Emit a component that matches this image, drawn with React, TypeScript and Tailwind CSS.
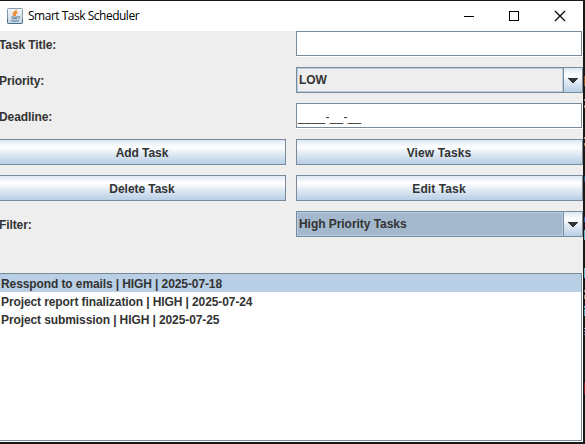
import type { ReactNode } from 'react';

const tasks = [
  { text: 'Resspond to emails | HIGH | 2025-07-18', selected: true },
  { text: 'Project report finalization | HIGH | 2025-07-24', selected: false },
  { text: 'Project submission | HIGH | 2025-07-25', selected: false },
];

function JavaIcon() {
  return (
    <svg width="16" height="16" viewBox="0 0 16 16" className="shrink-0">
      <defs>
        <linearGradient id="tile" x1="0" y1="0" x2="0" y2="1">
          <stop offset="0" stopColor="#f4f7f9" />
          <stop offset="1" stopColor="#c3d2df" />
        </linearGradient>
      </defs>
      <rect x="0.5" y="0.5" width="15" height="15" rx="1" fill="url(#tile)" stroke="#8199ab" />
      <path d="M0.5 11v3.5q0 1 1 1h13q1 0 1-1V11" fill="none" stroke="#47708f" />
      <path d="M9.2 1.8C9.6 3.8 5.8 4.3 6.2 6c.2.9 1 1.2 1 2.1M10.5 4.2C8.8 4.8 7.8 5.4 8.3 6.4c.3.6.4.9-.1 1.6" fill="none" stroke="#ee8a2d" strokeWidth="1.5" />
      <path d="M4.5 8.8q3.5 1 6.5 0M5 10.5q2.8.9 5.3 0M4 12.7q4 1.2 8-.1M11.2 8.6c2.2-.6 2 1.6.2 2" fill="none" stroke="#557b98" />
    </svg>
  );
}

function TitleBar() {
  return (
    <header className="flex h-[30px] items-center bg-white pl-[7px]">
      <JavaIcon />
      <span className="ml-[5px] flex-1 whitespace-nowrap font-['Open_Sans',sans-serif] text-[12px] leading-4 tracking-[-0.49px] text-black">
        Smart Task Scheduler
      </span>
      <svg width="102" height="10" viewBox="0 0 102 10" shapeRendering="crispEdges" className="mr-[17px] overflow-visible" fill="none" stroke="#000">
        <path d="M0 5.5h10M45.5.5h9v9h-9z" />
        <path d="M91 0l10 10M101 0l-10 10" shapeRendering="auto" strokeWidth="1.2" />
      </svg>
    </header>
  );
}

function Label({ children }: { children: ReactNode }) {
  return <div className="-ml-px flex h-[26px] items-center pt-[2px]">{children}</div>;
}

function TextField({ value }: { value?: string }) {
  return (
    <div className="h-[26px] border-r border-b border-white">
      <div className="flex h-[25px] items-center border border-[#7a8a99] bg-white pl-px pt-[3px] font-normal tracking-[0.2px]">{value}</div>
    </div>
  );
}

function Button({ children, first }: { children: ReactNode; first?: boolean }) {
  return (
    <button
      className={`flex h-[26px] items-center justify-center border-y border-r border-[#7a8a99] bg-[linear-gradient(180deg,#dde8f3_0%,#ffffff_30%,#dde8f3_60%,#b8cfe5_100%)] pt-[2px] ${first ? 'pr-px tracking-[-0.05px]' : 'border-l pr-px tracking-[0.1px]'}`}
    >
      {children}
    </button>
  );
}

function ComboBox({ value, focused }: { value: string; focused?: boolean }) {
  return (
    <div className="flex h-[26px] border border-[#7a8a99] tracking-[-0.05px]">
      <div className={`flex flex-1 items-center border border-[#b8cfe5] pl-[1px] ${focused ? 'bg-[#a3b8cc]' : 'bg-[#eeeeee]'}`}>
        {value}
      </div>
      <div className="flex w-[19px] items-start justify-center border-l border-[#7a8a99] bg-[linear-gradient(180deg,#dde8f3_0%,#ffffff_30%,#dde8f3_60%,#b8cfe5_100%)] pt-[10px]">
        <svg width="10" height="5" viewBox="0 0 10 5" shapeRendering="crispEdges">
          <path d="M0 0h10v1H9v1H8v1H7v1H6v1H4V4H3V3H2V2H1V1H0z" fill="#333" />
        </svg>
      </div>
    </div>
  );
}

function TaskList() {
  return (
    <div className="mt-9 h-[169px] border-r border-b border-white">
      <ul className="h-[168px] border-t border-r border-b border-[#7a8a99] bg-white">
        {tasks.map((task) => (
          <li key={task.text} className={`flex h-[18px] items-center whitespace-nowrap pl-px pt-[2px] ${task.selected ? 'bg-[#b8cfe5]' : ''}`}>
            {task.text}
          </li>
        ))}
      </ul>
    </div>
  );
}

// Sliver of the editor window visible behind the right edge.
function Backdrop() {
  return (
    <div className="flex w-[2px] flex-col items-end">
      <div className="mt-[75px] h-[10px] w-px bg-[#8a5a22]" />
      <div className="mt-[13px] h-[2px] w-px bg-[#8f8f7a]" />
      <div className="mt-[4px] h-[3px] w-px bg-[#a8926a]" />
      <div className="mt-[29px] h-[2px] w-px bg-[#b09a86]" />
      <div className="mt-[4px] h-[3px] w-px bg-[#a87c4a]" />
      <div className="mt-[30px] h-[6px] w-px bg-[#1d5672]" />
      <div className="mt-[35px] h-[5px] w-px bg-[#2d5fb0]" />
      <div className="mt-[8px] h-[10px] w-px bg-[#64b4c4]" />
      <div className="mt-[28px] h-[10px] w-px bg-[#64b4c4]" />
      <div className="mt-[12px] h-[2px] w-px bg-[#8f8f8f]" />
      <div className="mt-[3px] h-[4px] w-px bg-[#a38a70]" />
      <div className="mt-[7px] h-[2px] w-px bg-[#64b4c4]" />
      <div className="mt-[1px] h-[7px] w-px bg-[#4f9fb0]" />
      <div className="mt-[12px] h-px w-px bg-[#5fa8c8]" />
      <div className="mt-[2px] h-px w-px bg-[#5fa8c8]" />
      <div className="mt-[2px] h-px w-px bg-[#7a8fd0]" />
      <div className="mt-[48px] h-[11px] w-px bg-[#8a2020]" />
    </div>
  );
}

export default function App() {
  return (
    <div className="flex h-[444px] w-[585px] overflow-hidden bg-[#181818] pt-px pb-[2px]">
      <div className="w-[583px]">
        <TitleBar />
        <main className="h-[411px] bg-[#eeeeee] font-['Liberation_Sans',Arial,sans-serif] text-[12px] font-bold leading-[14px] tracking-[-0.1px] text-[#333333]">
          <div className="grid grid-cols-[286px_287px] gap-[10px]">
            <Label>Task Title:</Label>
            <TextField />
            <Label>Priority:</Label>
            <ComboBox value="LOW" />
            <Label>Deadline:</Label>
            <TextField value="____-__-__" />
            <Button first>Add Task</Button>
            <Button>View Tasks</Button>
            <Button first>Delete Task</Button>
            <Button>Edit Task</Button>
            <Label>Filter:</Label>
            <ComboBox value="High Priority Tasks" focused />
          </div>
          <TaskList />
        </main>
      </div>
      <Backdrop />
    </div>
  );
}
